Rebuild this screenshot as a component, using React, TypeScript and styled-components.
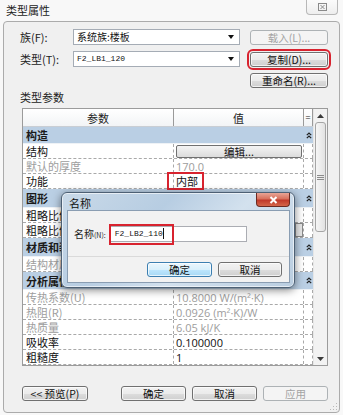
import React from "react";
import styled, { createGlobalStyle } from "styled-components";

const GlobalStyle = createGlobalStyle`
  *, *::before, *::after { box-sizing: border-box; }
  html, body { margin: 0; padding: 0; background: #f7f7f7; }
  body { font-family: "Noto Sans CJK SC", "Noto Sans", sans-serif; color: #1b1b1b; }
`;

type Row =
  | { kind: "group"; label: string; h: number }
  | { kind: "data"; label: string; value?: string; muted?: boolean; edit?: boolean; swatch?: boolean };

const rows: Row[] = [
  { kind: "group", label: "构造", h: 17 },
  { kind: "data", label: "结构", edit: true },
  { kind: "data", label: "默认的厚度", value: "170.0", muted: true },
  { kind: "data", label: "功能", value: "内部" },
  { kind: "group", label: "图形", h: 19 },
  { kind: "data", label: "粗略比例填充样式", value: "" },
  { kind: "data", label: "粗略比例填充颜色", value: "黑色", swatch: true },
  { kind: "group", label: "材质和装饰", h: 19 },
  { kind: "data", label: "结构材质", value: "<按类别>", muted: true },
  { kind: "group", label: "分析属性", h: 18 },
  { kind: "data", label: "传热系数(U)", value: "10.8000 W/(m²·K)", muted: true },
  { kind: "data", label: "热阻(R)", value: "0.0926 (m²·K)/W", muted: true },
  { kind: "data", label: "热质量", value: "6.05 kJ/K", muted: true },
  { kind: "data", label: "吸收率", value: "0.100000" },
  { kind: "data", label: "粗糙度", value: "1" },
];

const App: React.FC = () => {
  return (
    <>
      <GlobalStyle />
      <Page>
        <TitleBar>
          <WindowTitle>类型属性</WindowTitle>
          <CloseBox>
            <svg width="9" height="8" viewBox="0 0 9 8">
              <rect x="0.5" y="0.5" width="8" height="7" fill="none" stroke="#8a8a8a" />
              <path d="M2.5 2 L6.5 6 M6.5 2 L2.5 6" stroke="#8a8a8a" strokeWidth="1" />
            </svg>
          </CloseBox>
        </TitleBar>

        <Frame>
          <FormGrid>
            <FieldLabel>族(F):</FieldLabel>
            <Select>
              <SelectText>系统族:楼板</SelectText>
              <DropArrow />
            </Select>
            <Button disabled>载入(L)...</Button>

            <FieldLabel>类型(T):</FieldLabel>
            <Select>
              <SelectText $mono>F2_LB1_120</SelectText>
              <DropArrow />
            </Select>
            <Button $marked>复制(D)...</Button>

            <span />
            <span />
            <Button>重命名(R)...</Button>
          </FormGrid>

          <SectionLabel>类型参数</SectionLabel>

          <TableBox>
            <TableGrid>
              <HeaderRow>
                <HeadCell>参数</HeadCell>
                <HeadCell>值</HeadCell>
                <HeadCell $small>=</HeadCell>
              </HeaderRow>
              {rows.map((r, i) =>
                r.kind === "group" ? (
                  <GroupRow key={i} $h={r.h}>
                    <GroupLabel>{r.label}</GroupLabel>
                    <ChevronCell>
                      <svg width="6" height="7" viewBox="0 0 6 7">
                        <path d="M0.8 3.2 L3 1 L5.2 3.2 M0.8 6.2 L3 4 L5.2 6.2" fill="none" stroke="#222" strokeWidth="1.2" />
                      </svg>
                    </ChevronCell>
                  </GroupRow>
                ) : (
                  <DataRow key={i}>
                    <Cell $muted={r.muted}>{r.label}</Cell>
                    <ValueCell $muted={r.muted}>
                      {r.edit ? <EditButton>编辑...</EditButton> : r.value}
                      {r.swatch && <CellButton />}
                    </ValueCell>
                    <Cell />
                  </DataRow>
                )
              )}
            </TableGrid>
            <ScrollBar>
              <ScrollArrow>
                <svg width="7" height="4" viewBox="0 0 7 4">
                  <path d="M0 4 L3.5 0 L7 4 Z" fill="#3a3a3a" />
                </svg>
              </ScrollArrow>
              <Thumb>
                <svg width="7" height="5" viewBox="0 0 7 5">
                  <path d="M0 0.5 H7 M0 2.5 H7 M0 4.5 H7" stroke="#8b8b8b" strokeWidth="1" />
                </svg>
              </Thumb>
              <Track />
              <ScrollArrow>
                <svg width="7" height="4" viewBox="0 0 7 4">
                  <path d="M0 0 L3.5 4 L7 0 Z" fill="#3a3a3a" />
                </svg>
              </ScrollArrow>
            </ScrollBar>
            {/* red annotation box drawn over the 功能 value */}
            <Annotation />
          </TableBox>

          <Footer>
            <Button $w={66}>&lt;&lt; 预览(P)</Button>
            <FooterGroup>
              <Button $w={65}>确定</Button>
              <Button $w={65}>取消</Button>
              <Button $w={65} disabled>应用</Button>
            </FooterGroup>
          </Footer>
          <Grip>
            <svg width="8" height="8" viewBox="0 0 8 8">
              <g fill="#b9b9b9">
                <rect x="6" y="0" width="1" height="1" />
                <rect x="3" y="3" width="1" height="1" />
                <rect x="6" y="3" width="1" height="1" />
                <rect x="0" y="6" width="1" height="1" />
                <rect x="3" y="6" width="1" height="1" />
                <rect x="6" y="6" width="1" height="1" />
              </g>
            </svg>
          </Grip>
        </Frame>

        <NameDialog>
          <DialogTitleBar>
            <DialogTitle>名称</DialogTitle>
            <RedClose>
              <svg width="9" height="8" viewBox="0 0 9 8">
                <path d="M1.5 1 L7.5 7 M7.5 1 L1.5 7" stroke="#fff" strokeWidth="2" />
              </svg>
            </RedClose>
          </DialogTitleBar>
          <DialogBody>
            <NameRow>
              <NameLabel>
                名称<Hotkey>(N):</Hotkey>
              </NameLabel>
              <NameInput>
                <InputText>F2_LB2_110</InputText>
                <Caret />
                <InputMark />
              </NameInput>
            </NameRow>
            <DialogFooter>
              <Button $w={65} $default>确定</Button>
              <Button $w={64}>取消</Button>
            </DialogFooter>
          </DialogBody>
        </NameDialog>
      </Page>
    </>
  );
};

const Page = styled.div`
  position: relative;
  width: 343px;
  height: 415px;
  overflow: hidden;
  display: flex;
  flex-direction: column;
  background: #f8f8f8;
  font-size: 11px;
`;

const TitleBar = styled.div`
  height: 21px;
  display: flex;
  align-items: flex-start;
  padding: 0 5px 0 6px;
`;

const WindowTitle = styled.div`
  font-size: 11px;
  line-height: 20px;
  color: #222;
`;

const CloseBox = styled.div`
  margin-left: auto;
  width: 32px;
  height: 15px;
  border: 1px solid #b8b8b8;
  border-top: none;
  border-radius: 0 0 4px 4px;
  background: linear-gradient(#fbfbfb, #eeeeee);
  display: flex;
  align-items: center;
  justify-content: center;
`;

const Frame = styled.div`
  position: relative;
  flex: 1;
  margin: 0 3px 2px 3px;
  border: 1px solid #ababab;
  border-radius: 4px;
  background: #f0f0f0;
  padding: 7px 11px 0 16px;
  display: flex;
  flex-direction: column;
`;

const FormGrid = styled.div`
  display: grid;
  grid-template-columns: 53px 167px 1fr;
  grid-template-rows: 16px 16px 15px;
  row-gap: 6px;
  align-items: center;
  justify-items: start;
  & > button {
    justify-self: end;
    width: 78px;
  }
`;

const FieldLabel = styled.div`
  font-size: 11px;
  color: #222;
  white-space: nowrap;
`;

const Select = styled.div`
  width: 167px;
  height: 16px;
  border: 1px solid #a5acb5;
  background: #fff;
  display: flex;
  align-items: center;
  padding: 0 5px 0 3px;
`;

const SelectText = styled.span<{ $mono?: boolean }>`
  flex: 1;
  font-family: ${(p) => (p.$mono ? '"Liberation Mono", monospace' : '"Noto Sans CJK SC", sans-serif')};
  font-size: ${(p) => (p.$mono ? "8px" : "10px")};
  line-height: 14px;
  color: #111;
`;

const DropArrow = styled.span`
  width: 0;
  height: 0;
  border-left: 3px solid transparent;
  border-right: 3px solid transparent;
  border-top: 4px solid #111;
`;

const Button = styled.button<{ $w?: number; $marked?: boolean; $default?: boolean }>`
  width: ${(p) => (p.$w ? `${p.$w}px` : "100%")};
  height: 15px;
  padding: 0;
  border: 1px solid ${(p) => (p.$default ? "#3c7fb1" : "#707070")};
  border-radius: 3px;
  background: ${(p) =>
    p.$default
      ? "linear-gradient(#eaf6fd 0%, #d9f0fc 50%, #bee6fd 51%, #a7d9f5 100%)"
      : "linear-gradient(#f2f2f2 0%, #ebebeb 50%, #dddddd 51%, #cfcfcf 100%)"};
  box-shadow: inset 0 0 0 1px rgba(255, 255, 255, 0.7);
  font-family: "Noto Sans CJK SC", sans-serif;
  font-size: 10.5px;
  line-height: 13px;
  white-space: nowrap;
  color: #111;
  outline: ${(p) => (p.$marked ? "2px solid #d8232f" : "none")};
  outline-offset: 1px;
  &:disabled {
    border-color: #adb2b5;
    background: #f4f4f4;
    color: #a3a3a3;
    box-shadow: none;
  }
`;

const SectionLabel = styled.div`
  height: 14px;
  margin: 2px 0 4px;
  font-size: 11px;
  line-height: 14px;
  color: #222;
`;

const TableBox = styled.div`
  position: relative;
  margin-left: 2px;
  height: 258px;
  border: 1px solid #9b9b9b;
  display: flex;
  background: #fff;
`;

const TableGrid = styled.div`
  flex: 1;
  min-width: 0;
  display: flex;
  flex-direction: column;
  overflow: hidden;
`;

const HeaderRow = styled.div`
  display: grid;
  grid-template-columns: 151px 130px 9px;
  height: 18px;
  flex-shrink: 0;
  background: linear-gradient(#ffffff, #f2f4f6);
  border-bottom: 1px solid #c9ced4;
`;

const HeadCell = styled.div<{ $small?: boolean }>`
  display: flex;
  align-items: center;
  justify-content: center;
  border-right: 1px solid #9a9a9a;
  font-size: ${(p) => (p.$small ? "9px" : "11px")};
  color: #222;
`;

const GroupRow = styled.div<{ $h: number }>`
  display: grid;
  grid-template-columns: 281px 9px;
  height: ${(p) => p.$h}px;
  flex-shrink: 0;
  background: #bacfe4;
  border-bottom: 1px solid #eef2f6;
`;

const GroupLabel = styled.div`
  display: flex;
  align-items: center;
  padding-left: 3px;
  font-size: 11px;
  font-weight: bold;
  color: #1a1a1a;
`;

const ChevronCell = styled.div`
  display: flex;
  align-items: center;
  justify-content: center;
`;

const DataRow = styled.div`
  display: grid;
  grid-template-columns: 151px 130px 9px;
  height: 15px;
  flex-shrink: 0;
  border-bottom: 1px dashed #a9a9a9;
`;

const Cell = styled.div<{ $muted?: boolean }>`
  min-width: 0;
  display: flex;
  align-items: center;
  padding-left: 3px;
  border-right: 1px dashed #a9a9a9;
  font-family: "Noto Sans CJK SC", sans-serif;
  font-size: 11px;
  white-space: nowrap;
  overflow: hidden;
  color: ${(p) => (p.$muted ? "#9d9d9d" : "#111")};
`;

const ValueCell = styled(Cell)`
  padding-left: 2px;
  font-family: "Open Sans", "Noto Sans CJK SC", sans-serif;
`;

const Annotation = styled.span`
  position: absolute;
  left: 144px;
  top: 63px;
  width: 37px;
  height: 18px;
  border: 2px solid #d8232f;
  pointer-events: none;
`;

const EditButton = styled.div`
  flex: 1;
  height: 13px;
  margin-right: 1px;
  border: 1px solid #707070;
  border-radius: 2px;
  background: linear-gradient(#f4f4f4, #dcdcdc);
  display: flex;
  align-items: center;
  justify-content: center;
  font-family: "Noto Sans CJK SC", sans-serif;
  font-size: 10.5px;
  color: #111;
`;

const CellButton = styled.span`
  margin-left: auto;
  width: 8px;
  height: 14px;
  border: 1px solid #8a8a8a;
  background: #e8e8e8;
`;

const ScrollBar = styled.div`
  width: 14px;
  flex-shrink: 0;
  display: flex;
  flex-direction: column;
  background: #f2f2f2;
  border-left: 1px solid #e6e6e6;
`;

const ScrollArrow = styled.div`
  height: 13px;
  display: flex;
  align-items: center;
  justify-content: center;
`;

const Thumb = styled.div`
  height: 110px;
  margin: 0 1px;
  border: 1px solid #a5a5a5;
  border-radius: 3px;
  background: linear-gradient(90deg, #f6f6f6, #e2e2e2);
  display: flex;
  align-items: center;
  justify-content: center;
`;

const Track = styled.div`
  flex: 1;
`;

const Footer = styled.div`
  display: flex;
  align-items: center;
  margin-top: 20px;
  padding-left: 2px;
`;

const FooterGroup = styled.div`
  margin-left: auto;
  display: flex;
  gap: 6px;
`;

const Grip = styled.div`
  position: absolute;
  right: 1px;
  bottom: 1px;
  line-height: 0;
`;

const NameDialog = styled.div`
  position: absolute;
  left: 61px;
  top: 192px;
  width: 234px;
  height: 96px;
  border: 1px solid #4d6074;
  border-radius: 6px;
  background: linear-gradient(135deg, #c9d9e8 0%, #b7cde2 35%, #d3e1ee 60%, #b9cde0 100%);
  box-shadow: 0 2px 9px rgba(0, 0, 0, 0.5), inset 0 0 0 1px rgba(255, 255, 255, 0.6);
  padding: 0 4px 4px 5px;
  display: flex;
  flex-direction: column;
`;

const DialogTitleBar = styled.div`
  height: 17px;
  display: flex;
  align-items: flex-start;
`;

const DialogTitle = styled.div`
  padding: 3px 0 0 2px;
  font-size: 11px;
  line-height: 14px;
  color: #111;
`;

const RedClose = styled.div`
  margin-left: auto;
  width: 34px;
  height: 14px;
  border: 1px solid #6b2a22;
  border-top: none;
  border-radius: 0 0 4px 4px;
  background: linear-gradient(#e8a596 0%, #d7705c 45%, #c0392a 55%, #d4664a 100%);
  display: flex;
  align-items: center;
  justify-content: center;
`;

const DialogBody = styled.div`
  flex: 1;
  border: 1px solid #8a9db2;
  background: #f2f2f2;
  display: flex;
  flex-direction: column;
`;

const NameRow = styled.div`
  height: 46px;
  display: flex;
  align-items: center;
  padding-left: 6px;
  border-bottom: 1px solid #dadada;
`;

const NameLabel = styled.div`
  flex-shrink: 0;
  margin-right: 3px;
  font-size: 10px;
  white-space: nowrap;
  color: #222;
`;

const Hotkey = styled.span`
  font-size: 7px;
`;

const NameInput = styled.div`
  position: relative;
  width: 138px;
  height: 16px;
  border: 1px solid #abadb3;
  background: #fff;
  display: flex;
  align-items: center;
  padding-left: 5px;
`;

const InputText = styled.span`
  font-family: "Liberation Mono", monospace;
  font-size: 8px;
  color: #111;
`;

const Caret = styled.span`
  width: 1px;
  height: 11px;
  background: #111;
`;

const InputMark = styled.span`
  position: absolute;
  left: -1px;
  top: -3px;
  width: 65px;
  height: 21px;
  border: 2px solid #d8232f;
`;

const DialogFooter = styled.div`
  flex: 1;
  display: flex;
  justify-content: flex-end;
  align-items: center;
  gap: 6px;
  padding-right: 7px;
`;

export default App;
